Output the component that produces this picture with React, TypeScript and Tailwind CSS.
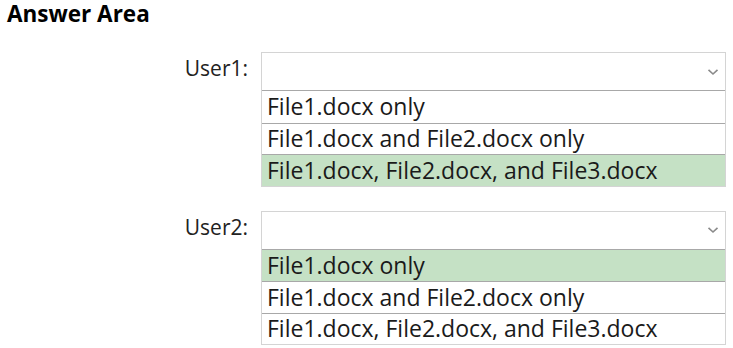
import React from "react";

const OPTIONS = [
  "File1.docx only",
  "File1.docx and File2.docx only",
  "File1.docx, File2.docx, and File3.docx",
];

function Chevron() {
  return (
    <svg width="12" height="8" viewBox="0 0 12 8" className="text-[#8a8a8a]">
      <path d="M1.5 1.8 L6 6 L10.5 1.8" fill="none" stroke="currentColor" strokeWidth="1.6" />
    </svg>
  );
}

function Question({ label, selected }: { label: string; selected: number }) {
  return (
    <div className="flex items-start">
      <div className="w-[261px] h-[39px] flex items-center justify-end pr-[13px] pb-[5px] text-[21px] text-[#222]">
        {label}
      </div>
      <div className="w-[465px] border border-[#d4d4d4]">
        <div className="h-[38px] flex items-center justify-end pr-[6px] border-b border-[#a8a8a8] bg-white">
          <Chevron />
        </div>
        {OPTIONS.map((o, i) => (
          <div
            key={i}
            className={
              "h-[31.5px] flex items-center pl-[5px] pb-[1px] text-[23px] text-[#1a1a1a] whitespace-nowrap " +
              (i > 0 ? "border-t border-[#a8a8a8] " : "") +
              (i === selected ? "bg-[#c5e1c5]" : "bg-white")
            }
          >
            {o}
          </div>
        ))}
      </div>
    </div>
  );
}

export default function App() {
  return (
    <div
      className="w-[733px] h-[348px] bg-white overflow-hidden"
      style={{ fontFamily: '"Open Sans", "Noto Sans", sans-serif' }}
    >
      <div className="pl-[7px] h-[52px] text-[22.5px] font-bold leading-[27px] text-black">
        Answer Area
      </div>
      <Question label="User1:" selected={2} />
      <div className="h-[24px]" />
      <Question label="User2:" selected={0} />
    </div>
  );
}
